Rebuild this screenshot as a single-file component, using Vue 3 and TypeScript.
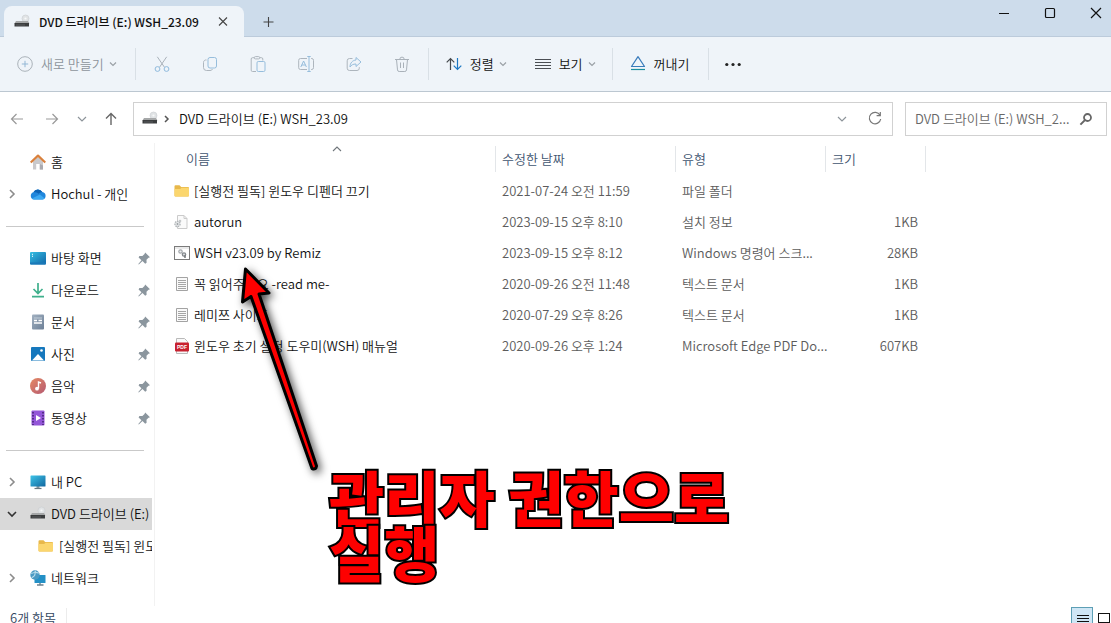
<script setup lang="ts">
import { ref } from 'vue'

interface NavItem {
  kind: 'item' | 'line'
  label?: string
  icon?: string
  arrow?: 'closed' | 'open'
  pinned?: boolean
  selected?: boolean
  child?: boolean
}

interface FileRow {
  name: string
  icon: string
  date: string
  type: string
  size: string
}

const icons: Record<string, string> = {
  drive:
    '<circle cx="11.500" cy="4.500" r="3.500" fill="#e0e3e5" stroke="#c9cdd0" stroke-width=".6"/><circle cx="11.500" cy="4.500" r="1.100" fill="#f8f9fa"/><path d="M2 7h12l1.500 2.500H.5z" fill="#a5a7a8"/><path d="M.5 9h14.500v3.500H.5z" fill="#3b3d3e"/><path d="M2 11h9" stroke="#636668" stroke-width=".8"/>',
  home:
    '<path d="M3 7.500 8 3l5 4.500V15.500H9.800V10H6.200v5.500H3z" fill="#c9c9cc"/><path d="M9.800 10v5.500H13v-4z" fill="#aaaab0"/><path d="M.7 8.500 8 1.600l7.300 6.900" fill="none" stroke="#d9803c" stroke-width="2.200" stroke-linejoin="round"/>',
  cloud:
    '<path d="M4 13.500a3.700 3.700 0 0 1-.6-7.200A5 5 0 0 1 12.300 6 3.800 3.800 0 0 1 12.500 13.500z" fill="#1f86dc"/><path d="M3.400 6.300A5 5 0 0 1 12.300 6c-2 .2-3 1-3.600 1.800C7 6.500 5 6.100 3.400 6.300z" fill="#0c62b4"/><path d="M2 12.500 10 8.600l4.800 3.900a3.800 3.800 0 0 1-2.300 1H4a3.500 3.500 0 0 1-2-1z" fill="#3ba8f2"/>',
  desktop:
    '<defs><linearGradient id="gd" x2="1" y2="1"><stop stop-color="#35bfe3"/><stop offset="1" stop-color="#1166a8"/></linearGradient></defs><rect x="0" y="2" width="16" height="12.500" rx="1" fill="url(#gd)"/><path d="M2 4.300h1M2 6.300h1" stroke="#fff"/><path d="M0 12.500h16v1a1 1 0 0 1-1 1H1a1 1 0 0 1-1-1z" fill="#1a79b8"/>',
  download:
    '<path d="M8 1v10M3.500 7 8 11.500 12.500 7M2 14.700h12" fill="none" stroke="#3fb08c" stroke-width="1.700"/>',
  document:
    '<defs><linearGradient id="gc" x2="1" y2="1"><stop stop-color="#a2b1c1"/><stop offset="1" stop-color="#6d8097"/></linearGradient></defs><rect x="2" y="0.500" width="12" height="15" rx="1" fill="url(#gc)"/><path d="M4 6.500h3M4 9h8M8.500 6.500h3.500" stroke="#fff" stroke-width="1.500"/><path d="M4 4h8" stroke="#c3ced9"/>',
  picture:
    '<rect x="1" y="1" width="14" height="14" rx="1" fill="#1678bd"/><path d="m2 14.500 6-6.500 6 6.500z" fill="#fff"/><circle cx="11.500" cy="4.500" r="1.300" fill="#fff"/>',
  music:
    '<defs><linearGradient id="gm" x2="1" y2="1"><stop stop-color="#e68a63"/><stop offset="1" stop-color="#b45a72"/></linearGradient></defs><circle cx="8" cy="8" r="8" fill="url(#gm)"/><path d="M8.500 10.500V4l2.500 1" fill="none" stroke="#fff" stroke-width="1.400"/><circle cx="7" cy="10.700" r="1.900" fill="#fff"/>',
  video:
    '<rect x="1.500" y="0.500" width="13" height="15" rx="1" fill="#9355d8"/><path d="M3 2v13M13 2v13" stroke="#42216f" stroke-width="1.500" stroke-dasharray="1.500 1.500"/><path d="m6 5 5 3-5 3z" fill="#fff"/>',
  pc:
    '<defs><linearGradient id="gp" x2="1" y2="1"><stop stop-color="#3ec4e8"/><stop offset="1" stop-color="#11679f"/></linearGradient></defs><path d="M6.500 12h3v2h-3z" fill="#8a979f"/><rect x=".5" y="1.500" width="15" height="11" rx=".6" fill="url(#gp)"/><path d="M4.500 14.500h7" stroke="#677780" stroke-width="1.200"/>',
  network:
    '<rect x="4.500" y="5" width="11" height="8" rx=".5" fill="#2390c6"/><path d="M7 15h6.500M10 13v2" stroke="#6c818e" stroke-width="1.400"/><circle cx="5" cy="5" r="4.700" fill="#4a99c3"/><path d="M1 3c2 1 3-.5 5-2M2 8c1-2 3-1 3-4s2-1 4-1" fill="none" stroke="#b6dbea" stroke-width="1.200"/>',
  folder:
    '<path d="M.5 3.300a1 1 0 0 1 1-1h4l1.700 1.600H14a1 1 0 0 1 1 1V12.500a1 1 0 0 1-1 1H1.500a1 1 0 0 1-1-1z" fill="#e8b84a"/><path d="M.5 6h5.700l1.300-1.300H14a1 1 0 0 1 1 1v6.800a1 1 0 0 1-1 1H1.500a1 1 0 0 1-1-1z" fill="#fbd66e"/>',
  setup:
    '<path d="M3.500 1.500h6.500l3 3v10h-9.500z" fill="#fafafa" stroke="#cbcbcb"/><path d="M10 1.500v3h3" fill="none" stroke="#cbcbcb"/><circle cx="3.500" cy="10" r="2.600" fill="#e4e6e8" stroke="#b1b5b8" stroke-width="1.300" stroke-dasharray="1.500 .8"/><circle cx="3.500" cy="10" r=".9" fill="#9ba0a3"/><circle cx="6" cy="7" r="1.300" fill="#c5c8ca"/>',
  script:
    '<rect x=".5" y="1.500" width="15" height="13" fill="#fff" stroke="#7b7b7b"/><path d="M1 3h14" stroke="#d5d5d5"/><circle cx="6.500" cy="6.500" r="1.700" fill="#eef0f1" stroke="#a3a7ab" stroke-width="1.200"/><circle cx="10" cy="9.500" r="1.700" fill="#d5d9dc" stroke="#85898d" stroke-width="1.200"/><path d="M11 10.500v2.500" stroke="#55595c" stroke-width="1.200"/>',
  text:
    '<path d="M2.500 1.500h11v13h-11z" fill="#fafafa" stroke="#a3a3a3"/><path d="M4 4.500h8M4 6.500h8M4 8.500h8M4 10.500h8M4 12.500h8" stroke="#a6a6a6"/>',
  pin:
    '<path d="M9.200 2.500 14 7.300l-1.500.5-2 2 .1 3L9.200 13.800 6.500 11 2.800 14.500 2.300 14l3.200-3.700L2.600 7.400l.8-1.400 3-.1L8.500 4z" fill="#8b969e"/>',
  plusCircle:
    '<circle cx="8" cy="8" r="7.300" fill="none" stroke="#aab2b9"/><path d="M8 4.800v6.400M4.800 8h6.400" stroke="#93b7d5"/>',
  cut:
    '<path d="M3.300.8 10.300 11M12.700.8 5.700 11" fill="none" stroke="#aab2ba"/><circle cx="3.500" cy="13" r="2.400" fill="none" stroke="#8fbadd"/><circle cx="12.500" cy="13" r="2.400" fill="none" stroke="#8fbadd"/>',
  copy:
    '<rect x="6" y="1.500" width="8.500" height="10.500" rx="2" fill="none" stroke="#96bddc"/><path d="M4.500 4A2.500 2.500 0 0 0 1.500 6.500v5a3 3 0 0 0 3 3H8a2.500 2.500 0 0 0 2.500-1.500" fill="none" stroke="#adb5bd"/>',
  paste:
    '<path d="M6 15.500H2.500a1.300 1.300 0 0 1-1.300-1.300V3a1.300 1.300 0 0 1 1.300-1.300H4.300M9.700 1.700h1.800A1.300 1.300 0 0 1 12.800 3v1.500" fill="none" stroke="#adb5bd"/><rect x="4.300" y=".6" width="5.400" height="2.300" rx="1.100" fill="none" stroke="#adb5bd"/><rect x="7" y="5.500" width="8" height="10" rx="1.300" fill="none" stroke="#96bddc"/>',
  rename:
    '<path d="M9 2.500H2.500A1.800 1.800 0 0 0 .7 4.300v7.400a1.800 1.800 0 0 0 1.800 1.800H9M13 2.500h.8a1.800 1.800 0 0 1 1.700 1.800v7.400a1.800 1.800 0 0 1-1.700 1.800H13" fill="none" stroke="#adb5bd"/><path d="M11 .5v15M9.300.5h3.400M9.300 15.500h3.400M2.800 11 5.600 5l2.800 6M3.800 9h3.600" fill="none" stroke="#96bddc"/>',
  share:
    '<path d="M6.500 2.500H3.500A2.300 2.300 0 0 0 1.200 4.800v7.400a2.300 2.300 0 0 0 2.300 2.300h7.500a2.300 2.300 0 0 0 2.300-2.300v-1" fill="none" stroke="#adb5bd"/><path d="M10 1.500 15 6l-5 4.500V8C7 8 5.300 9 4 11c0-4 2.500-6.700 6-7z" fill="none" stroke="#96bddc" stroke-linejoin="round"/>',
  trash:
    '<path d="M1 3.500h14M5.800 3.300a2.200 2.200 0 0 1 4.400 0M2.500 3.500l1 10.400a1.700 1.700 0 0 0 1.700 1.600h5.600a1.700 1.700 0 0 0 1.700-1.600l1-10.400M6.500 6.500v5.500M9.500 6.500v5.500" fill="none" stroke="#a9b1b9"/>',
  sort:
    '<path d="M4.500 14V2.500M.7 6.300 4.500 2.500 8.300 6.300" fill="none" stroke="#44484d" stroke-width="1.200"/><path d="M11.500 2v11.500M7.700 9.700l3.800 3.800 3.800-3.800" fill="none" stroke="#1c77c3" stroke-width="1.200"/>',
  view: '<path d="M0 3.500h16M0 6.500h16M0 9.500h16M0 12.500h16" stroke="#4a4e53"/>',
  eject:
    '<path d="M8 .7 14.500 10.500H1.500z" fill="none" stroke="#3a7cbb" stroke-width="1.200" stroke-linejoin="round"/><path d="M1 13.500h14" stroke="#1d8e9f" stroke-width="1.200"/>',
  more:
    '<circle cx="1.800" cy="8.500" r="1.600" fill="#222"/><circle cx="8" cy="8.500" r="1.600" fill="#222"/><circle cx="14.200" cy="8.500" r="1.600" fill="#222"/>',
  chevDown: '<path d="m4 6 4 4 4-4" fill="none" stroke="#8d949a" stroke-width="1.200"/>',
  chevSmall: '<path d="m5 6.500 3 3 3-3" fill="none" stroke="#9aa0a6" stroke-width="1.200"/>',
  chevUp: '<path d="m4 10 4-4 4 4" fill="none" stroke="#70767b" stroke-width="1.100"/>',
  chevRight: '<path d="m6 4 4 4-4 4" fill="none" stroke="#8c8c8c" stroke-width="1.600"/>',
  chevCrumb: '<path d="m7 5 3 3-3 3" fill="none" stroke="#555" stroke-width="1.500"/>',
  chevOpen: '<path d="m4 6 4 4 4-4" fill="none" stroke="#333" stroke-width="1.600"/>',
  back: '<path d="M14 8H2.500M7.500 3 2.500 8l5 5" fill="none" stroke="#999" stroke-width="1.200"/>',
  forward: '<path d="M2 8h11.500M8.500 3l5 5-5 5" fill="none" stroke="#999" stroke-width="1.200"/>',
  up: '<path d="M8 14V2.500M3 7.500l5-5 5 5" fill="none" stroke="#666" stroke-width="1.400"/>',
  refresh:
    '<path d="M13 4.200A5.700 5.700 0 1 0 13.700 8M13.300 1v3.700H9.600" fill="none" stroke="#777" stroke-width="1.200"/>',
  search:
    '<circle cx="9.500" cy="6.500" r="3.500" fill="none" stroke="#666" stroke-width="1.800"/><path d="m6.900 9.100-4.500 4.500" stroke="#666" stroke-width="2"/>',
  close: '<path d="m4 3.500 8 8M12 3.500l-8 8" stroke="#444" stroke-width="1.100"/>',
  plus: '<path d="M8.500 3v10M3.500 8h10" stroke="#444" stroke-width="1.100"/>',
  winMin: '<path d="M3 8.500h10" stroke="#111"/>',
  winMax: '<rect x="3.500" y="3.500" width="9" height="9" rx="1" fill="none" stroke="#111" stroke-width="1.200"/>',
  winClose: '<path d="m3 3 10 10M13 3 3 13" stroke="#111" stroke-width="1.200"/>',
  details: '<path d="M2 5.500h12M2 8.500h12M2 11.500h12" stroke="#111"/>',
  large: '<rect x="2.500" y="3.500" width="11" height="9" fill="#fff" stroke="#111"/>',
}

const editTools = [
  { icon: 'cut', label: '잘라내기' },
  { icon: 'copy', label: '복사' },
  { icon: 'paste', label: '붙여넣기' },
  { icon: 'rename', label: '이름 바꾸기' },
  { icon: 'share', label: '공유' },
  { icon: 'trash', label: '삭제' },
]

const navItems: NavItem[] = [
  { kind: 'item', label: '홈', icon: 'home' },
  { kind: 'item', label: 'Hochul - 개인', icon: 'cloud', arrow: 'closed' },
  { kind: 'line' },
  { kind: 'item', label: '바탕 화면', icon: 'desktop', pinned: true },
  { kind: 'item', label: '다운로드', icon: 'download', pinned: true },
  { kind: 'item', label: '문서', icon: 'document', pinned: true },
  { kind: 'item', label: '사진', icon: 'picture', pinned: true },
  { kind: 'item', label: '음악', icon: 'music', pinned: true },
  { kind: 'item', label: '동영상', icon: 'video', pinned: true },
  { kind: 'line' },
  { kind: 'item', label: '내 PC', icon: 'pc', arrow: 'closed' },
  { kind: 'item', label: 'DVD 드라이브 (E:)', icon: 'drive', arrow: 'open', selected: true },
  { kind: 'item', label: '[실행전 필독] 윈도우', icon: 'folder', child: true },
  { kind: 'item', label: '네트워크', icon: 'network', arrow: 'closed' },
]

const files: FileRow[] = [
  { name: '[실행전 필독] 윈도우 디펜더 끄기', icon: 'folder', date: '2021-07-24 오전 11:59', type: '파일 폴더', size: '' },
  { name: 'autorun', icon: 'setup', date: '2023-09-15 오후 8:10', type: '설치 정보', size: '1KB' },
  { name: 'WSH v23.09 by Remiz', icon: 'script', date: '2023-09-15 오후 8:12', type: 'Windows 명령어 스크...', size: '28KB' },
  { name: '꼭 읽어주세요 -read me-', icon: 'text', date: '2020-09-26 오전 11:48', type: '텍스트 문서', size: '1KB' },
  { name: '레미쯔 사이트', icon: 'text', date: '2020-07-29 오후 8:26', type: '텍스트 문서', size: '1KB' },
  { name: '윈도우 초기 설정 도우미(WSH) 매뉴얼', icon: 'pdf', date: '2020-09-26 오후 1:24', type: 'Microsoft Edge PDF Do...', size: '607KB' },
]

const query = ref('')
</script>

<template>
  <div class="window">
    <header class="titlebar">
      <div class="tab">
        <svg class="icon" viewBox="0 0 16 16" v-html="icons.drive" />
        <span class="tab-title">DVD 드라이브 (E:) WSH_23.09</span>
        <button class="plain" aria-label="탭 닫기"><svg class="icon" viewBox="0 0 16 16" v-html="icons.close" /></button>
      </div>
      <button class="plain new-tab" aria-label="새 탭"><svg class="icon" viewBox="0 0 16 16" v-html="icons.plus" /></button>
      <div class="window-buttons">
        <button class="plain" aria-label="최소화"><svg class="icon" viewBox="0 0 16 16" v-html="icons.winMin" /></button>
        <button class="plain" aria-label="최대화"><svg class="icon" viewBox="0 0 16 16" v-html="icons.winMax" /></button>
        <button class="plain" aria-label="닫기"><svg class="icon" viewBox="0 0 16 16" v-html="icons.winClose" /></button>
      </div>
    </header>

    <div class="toolbar">
      <div class="group">
        <button class="plain command muted">
          <svg class="icon" viewBox="0 0 16 16" v-html="icons.plusCircle" />
          <span>새로 만들기</span>
          <svg class="icon chev" viewBox="0 0 16 16" v-html="icons.chevSmall" />
        </button>
      </div>
      <div class="group edit">
        <button v-for="tool in editTools" :key="tool.icon" class="plain tool" :aria-label="tool.label">
          <svg class="icon" viewBox="0 0 16 16" v-html="icons[tool.icon]" />
        </button>
      </div>
      <div class="group">
        <button class="plain command">
          <svg class="icon" viewBox="0 0 16 16" v-html="icons.sort" />
          <span>정렬</span>
          <svg class="icon chev" viewBox="0 0 16 16" v-html="icons.chevSmall" />
        </button>
        <button class="plain command">
          <svg class="icon" viewBox="0 0 16 16" v-html="icons.view" />
          <span>보기</span>
          <svg class="icon chev" viewBox="0 0 16 16" v-html="icons.chevSmall" />
        </button>
      </div>
      <div class="group eject">
        <button class="plain command">
          <svg class="icon" viewBox="0 0 16 16" v-html="icons.eject" />
          <span>꺼내기</span>
        </button>
      </div>
      <button class="plain tool" aria-label="더 보기"><svg class="icon" viewBox="0 0 16 16" v-html="icons.more" /></button>
    </div>

    <div class="location">
      <div class="history">
        <button class="plain" aria-label="뒤로"><svg class="icon" viewBox="0 0 16 16" v-html="icons.back" /></button>
        <button class="plain" aria-label="앞으로"><svg class="icon" viewBox="0 0 16 16" v-html="icons.forward" /></button>
        <button class="plain" aria-label="최근 위치"><svg class="icon" viewBox="0 0 16 16" v-html="icons.chevDown" /></button>
        <button class="plain" aria-label="위로"><svg class="icon" viewBox="0 0 16 16" v-html="icons.up" /></button>
      </div>
      <div class="address">
        <svg class="icon" viewBox="0 0 16 16" v-html="icons.drive" />
        <svg class="icon" viewBox="0 0 16 16" v-html="icons.chevCrumb" />
        <a class="crumb" href="#">DVD 드라이브 (E:) WSH_23.09</a>
        <button class="plain" aria-label="이전 위치"><svg class="icon" viewBox="0 0 16 16" v-html="icons.chevDown" /></button>
        <button class="plain" aria-label="새로 고침"><svg class="icon" viewBox="0 0 16 16" v-html="icons.refresh" /></button>
      </div>
      <div class="search">
        <input v-model="query" type="text" aria-label="검색" placeholder="DVD 드라이브 (E:) WSH_2..." />
        <button class="plain" aria-label="검색 시작"><svg class="icon" viewBox="0 0 16 16" v-html="icons.search" /></button>
      </div>
    </div>

    <div class="body">
      <nav class="sidebar">
        <template v-for="(item, i) in navItems" :key="i">
          <div v-if="item.kind === 'line'" class="nav-line"><hr /></div>
          <a v-else href="#" class="nav-item" :class="{ selected: item.selected, child: item.child }">
            <span class="nav-arrow">
              <svg v-if="item.arrow" class="icon" viewBox="0 0 16 16" v-html="item.arrow === 'open' ? icons.chevOpen : icons.chevRight" />
            </span>
            <svg class="icon" viewBox="0 0 16 16" v-html="icons[item.icon ?? '']" />
            <span class="nav-label">{{ item.label }}</span>
            <svg v-if="item.pinned" class="icon" viewBox="0 0 16 16" v-html="icons.pin" />
          </a>
        </template>
      </nav>

      <main class="content">
        <table class="files">
          <colgroup>
            <col class="col-name" />
            <col class="col-date" />
            <col class="col-type" />
            <col class="col-size" />
          </colgroup>
          <thead>
            <tr>
              <th scope="col" class="sorted">
                <span>이름</span>
                <svg class="icon sort-mark" viewBox="0 0 16 16" v-html="icons.chevUp" />
              </th>
              <th scope="col">수정한 날짜</th>
              <th scope="col">유형</th>
              <th scope="col">크기</th>
            </tr>
          </thead>
          <tbody>
            <tr v-for="file in files" :key="file.name">
              <td>
                <div class="file-name">
                  <svg v-if="file.icon === 'pdf'" class="icon" viewBox="0 0 16 16">
                    <path d="M2.500.500h8l3 3v12h-11z" fill="#f8f8f8" stroke="#b9b9b9" />
                    <rect x="1" y="4.500" width="14" height="9" rx="1" fill="#c8202f" />
                    <text x="8" y="11" class="pdf-text">PDF</text>
                  </svg>
                  <svg v-else class="icon" viewBox="0 0 16 16" v-html="icons[file.icon]" />
                  <span>{{ file.name }}</span>
                </div>
              </td>
              <td>{{ file.date }}</td>
              <td>{{ file.type }}</td>
              <td class="size">{{ file.size }}</td>
            </tr>
          </tbody>
        </table>

        <svg class="pointer" viewBox="0 0 110 230" aria-hidden="true">
          <path
            d="M15.500 9 39 33 29 34 86.500 206 Q86 210 82 208.500 L21 36.500 12.500 42z"
            fill="#fe0000"
            stroke="#000"
            stroke-width="3"
            stroke-linejoin="round"
          />
        </svg>
        <p class="callout">관리자 권한으로<br />실행</p>
      </main>
    </div>

    <footer class="status">
      <span class="count">6개 항목</span>
      <div class="view-modes">
        <button class="plain mode active" aria-label="자세히"><svg class="icon" viewBox="0 0 16 16" v-html="icons.details" /></button>
        <button class="plain mode" aria-label="큰 아이콘"><svg class="icon" viewBox="0 0 16 16" v-html="icons.large" /></button>
      </div>
    </footer>
  </div>
</template>

<style>
body {
  margin: 0;
}
</style>

<style scoped>
.window {
  display: flex;
  flex-direction: column;
  height: 100vh;
  overflow: hidden;
  background: #fff;
  color: #111;
  font-family: 'Noto Sans CJK KR', 'Open Sans', sans-serif;
  font-size: 13px;
  font-weight: 350;
  line-height: 20px;
}
.window > * {
  flex-shrink: 0;
}
.icon {
  display: block;
  flex: none;
  width: 16px;
  height: 16px;
}
.plain {
  display: flex;
  align-items: center;
  justify-content: center;
  padding: 0;
  border: 0;
  background: none;
  color: inherit;
  font: inherit;
}
a {
  color: inherit;
  text-decoration: none;
}

.titlebar {
  display: flex;
  align-items: flex-end;
  height: 37px;
  background: #cddceb;
  box-shadow: inset 0 -1px #bccbdb;
}
.tab {
  display: flex;
  align-items: center;
  box-sizing: border-box;
  width: 240px;
  height: 31px;
  margin-left: 4px;
  padding: 0 13px 0 10px;
  border-radius: 8px 8px 0 0;
  background: #eff4f9;
}
.tab-title {
  flex: 1;
  margin-left: 9px;
  font-size: 12px;
  font-weight: 500;
  white-space: nowrap;
}
.new-tab {
  width: 48px;
  height: 31px;
}
.window-buttons {
  display: flex;
  align-self: flex-start;
  gap: 16px;
  margin-left: auto;
}
.window-buttons .plain {
  width: 30px;
  height: 25px;
}

.toolbar {
  display: flex;
  align-items: center;
  height: 54px;
  border-bottom: 1px solid #bcc7d1;
  background: #eff4f9;
}
.group {
  display: flex;
  align-items: center;
  height: 32px;
  padding-left: 5px;
  border-right: 1px solid #d9e0e6;
}
.edit {
  padding: 0 2px;
}
.eject {
  padding-right: 7px;
}
.command {
  gap: 8px;
  height: 32px;
  padding: 0 12px;
  white-space: nowrap;
}
.command .chev {
  margin-left: -7px;
}
.muted {
  padding-right: 14px;
  color: #8d959c;
}
.tool {
  width: 48px;
  height: 32px;
}

.location {
  display: flex;
  padding: 10px 4px 7px 0;
}
.history {
  display: grid;
  grid-template-columns: 34px 36px 24px 34px;
  align-items: center;
  width: 133px;
}
.address,
.search {
  display: flex;
  align-items: center;
  box-sizing: border-box;
  height: 34px;
  border: 1px solid #d1d1d1;
}
.address {
  flex: 1;
  padding: 0 9px 0 8px;
}
.crumb {
  flex: 1;
  margin-left: 5px;
}
.address .plain + .plain {
  margin-left: 17px;
}
.search {
  width: 202px;
  margin-left: 12px;
  padding: 0 12px 0 9px;
}
.search input {
  flex: 1;
  min-width: 0;
  padding: 0;
  border: 0;
  outline: 0;
  background: none;
  color: #111;
  font: inherit;
}
.search input::placeholder {
  color: #686868;
  opacity: 1;
}

.body {
  display: flex;
}
.sidebar {
  box-sizing: border-box;
  width: 155px;
  padding: 3px 2px 12px 0;
  border-right: 1px solid #f2f2f2;
}
.nav-item {
  display: flex;
  align-items: center;
  height: 32px;
  overflow: hidden;
  white-space: nowrap;
}
.nav-item.selected {
  background: #d9d9d9;
}
.nav-arrow {
  flex: none;
  width: 26px;
  padding-left: 4px;
}
.child .nav-arrow {
  width: 34px;
}
.nav-label {
  flex: 1;
  margin-left: 5px;
}
.nav-line {
  display: flex;
  align-items: center;
  height: 32px;
  padding: 0 8px 0 6px;
}
.nav-line hr {
  flex: 1;
  margin: 0;
  border: 0;
  border-top: 1px solid #c9c9c9;
}

.content {
  position: relative;
  flex: 1;
  min-width: 0;
  padding-left: 19px;
}
.files {
  width: 752px;
  border-spacing: 0;
  table-layout: fixed;
}
.col-name {
  width: 322px;
}
.col-date {
  width: 180px;
}
.col-type {
  width: 150px;
}
.col-size {
  width: 100px;
}
th {
  height: 32px;
  padding: 0 6px;
  background: linear-gradient(#e3e6e9, #e3e6e9) right center / 1px 26px no-repeat;
  color: #3f5570;
  font-weight: inherit;
  text-align: left;
}
.sorted {
  position: relative;
  padding-left: 12px;
}
.sort-mark {
  position: absolute;
  top: -2px;
  left: 50%;
  margin-left: -6px;
}
td {
  height: 31px;
  padding: 0 8px 0 6px;
  color: #5c5c5c;
  white-space: nowrap;
}
td:first-child {
  padding-left: 0;
}
.file-name {
  display: flex;
  align-items: center;
  gap: 4px;
  color: #111;
}
.size {
  text-align: right;
}
.pdf-text {
  fill: #fff;
  font-family: 'Liberation Sans', sans-serif;
  font-size: 5px;
  font-weight: 700;
  text-anchor: middle;
}
.pointer {
  position: absolute;
  top: 117px;
  left: 75px;
  width: 110px;
  height: 230px;
  filter: drop-shadow(3px 3px 4px rgba(0, 0, 0, 0.7));
}
.callout {
  position: absolute;
  top: 325px;
  left: 174px;
  margin: 0;
  color: #fe0000;
  font-size: 60px;
  font-weight: 900;
  line-height: 55px;
  white-space: nowrap;
  -webkit-text-stroke: 4px #000;
  paint-order: stroke fill;
}

.status {
  display: flex;
  align-items: center;
  justify-content: space-between;
  height: 24px;
  padding-left: 10px;
  color: #33475f;
}
.count {
  padding-right: 10px;
  border-right: 1px solid #ececec;
}
.view-modes {
  display: flex;
}
.mode {
  box-sizing: border-box;
  width: 18px;
  height: 22px;
  padding-left: 4px;
}
.mode.active {
  width: 22px;
  padding-left: 2px;
  border: 1px solid #5d9fb5;
  background: #cfe6f5;
}
</style>
